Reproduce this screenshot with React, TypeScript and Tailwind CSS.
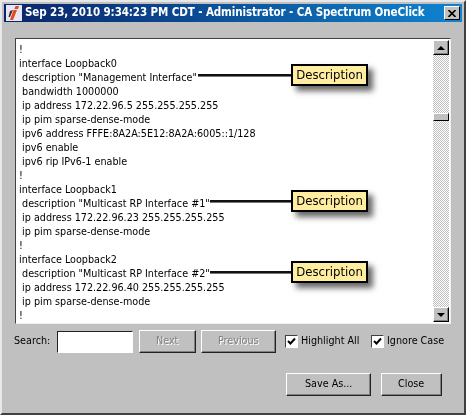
import type { ReactNode } from "react";

const lines = [
  "!",
  "interface Loopback0",
  " description \"Management Interface\"",
  " bandwidth 1000000",
  " ip address 172.22.96.5 255.255.255.255",
  " ip pim sparse-dense-mode",
  " ipv6 address FFFE:8A2A:5E12:8A2A:6005::1/128",
  " ipv6 enable",
  " ipv6 rip IPv6-1 enable",
  "!",
  "interface Loopback1",
  " description \"Multicast RP Interface #1\"",
  " ip address 172.22.96.23 255.255.255.255",
  " ip pim sparse-dense-mode",
  "!",
  "interface Loopback2",
  " description \"Multicast RP Interface #2\"",
  " ip address 172.22.96.40 255.255.255.255",
  " ip pim sparse-dense-mode",
  "!",
];

const callouts = [
  { top: 25, lineLeft: 182, lineWidth: 93 },
  { top: 151, lineLeft: 194, lineWidth: 81 },
  { top: 222, lineLeft: 194, lineWidth: 81 },
];

function Callout({ top, lineLeft, lineWidth }: { top: number; lineLeft: number; lineWidth: number }) {
  return (
    <>
      <div
        className="absolute h-[3px] bg-[#111] border-b border-[#777]"
        style={{ top: top + 10, left: lineLeft, width: lineWidth }}
      />
      <div
        className="absolute left-[275px] w-[77px] h-[22px] bg-[#ffee9f] border-2 border-black text-[13px] leading-[18px] text-center text-black shadow-[5px_5px_6px_rgba(0,0,0,0.6)]"
        style={{ top }}
      >
        Description
      </div>
    </>
  );
}

function Arrow({ up }: { up?: boolean }) {
  return (
    <div className="w-[16px] h-[15px] bg-[#c0c0c0] border border-t-white border-l-white border-r-black border-b-black shadow-[inset_-1px_-1px_0_#808080] flex items-center justify-center shrink-0">
      <svg width="8" height="4" viewBox="0 0 8 4">
        <path d={up ? "M0 4 L4 0 L8 4 Z" : "M0 0 L8 0 L4 4 Z"} fill="#000" />
      </svg>
    </div>
  );
}

function Button({ children, disabled, width }: { children: ReactNode; disabled?: boolean; width: string }) {
  return (
    <div
      className={`${width} h-[23px] flex items-center justify-center border border-t-white border-l-white border-r-[#222] border-b-[#222] shadow-[inset_-1px_-1px_0_#808080] text-[10.7px] ${
        disabled ? "text-[#808080] [text-shadow:1px_1px_0_#fff]" : "text-black"
      }`}
    >
      <span className="will-change-transform">{children}</span>
    </div>
  );
}

function Check({ label }: { label: string }) {
  return (
    <div className="flex items-center gap-[3px] text-[10.7px] text-black">
      <div className="w-[13px] h-[13px] bg-white border border-t-[#404040] border-l-[#404040] border-r-white border-b-white flex items-center justify-center">
        <svg width="9" height="9" viewBox="0 0 9 9">
          <path d="M1 4 L3.5 6.5 L8 1.5" fill="none" stroke="#000" strokeWidth="2" />
        </svg>
      </div>
      <span className="will-change-transform">{label}</span>
    </div>
  );
}

export default function App() {
  return (
    <div className="w-[466px] h-[415px] bg-[#c0c0c0] border-2 border-t-[#e8e8e8] border-l-[#e8e8e8] border-r-[#404040] border-b-[#404040] p-[2px] flex flex-col font-['DejaVu_Sans_Condensed','Liberation_Sans',sans-serif] overflow-hidden">
      <div className="h-[18px] shrink-0 flex items-center bg-gradient-to-r from-[#0a246a] to-[#1084d0]">
        <div className="ml-[2px] w-[16px] h-[16px] bg-[#e8e6f2] flex items-center justify-center shrink-0">
          <svg width="16" height="16" viewBox="0 0 16 16">
            <path d="M4 6 L7 5 L4 12 L2.5 12 Z" fill="#333" />
            <path d="M9.5 1 L13 1 L12 4 L8.5 4 Z" fill="#e8481c" />
            <path d="M7.5 5 L11 5 L7 15 L4 15 Z" fill="#e8481c" />
          </svg>
        </div>
        <div className="ml-[3px] text-white font-bold text-[11.5px] tracking-[-0.1px] whitespace-nowrap will-change-transform">
          Sep 23, 2010 9:34:23 PM CDT - Administrator - CA Spectrum OneClick
        </div>
        <div className="ml-auto mr-[2px] w-[16px] h-[14px] bg-[#c0c0c0] border border-t-white border-l-white border-r-black border-b-black flex items-center justify-center shrink-0">
          <svg width="8" height="7" viewBox="0 0 8 7">
            <path d="M0.5 0 L7.5 7 M7.5 0 L0.5 7" stroke="#000" strokeWidth="1.6" />
          </svg>
        </div>
      </div>

      <div className="mt-[16px] mx-[11px] h-[286px] shrink-0 flex relative bg-white border border-t-[#404040] border-l-[#404040] border-r-[#f0f0f0] border-b-[#f0f0f0] overflow-hidden">
        <div className="flex-1 pt-[4px] pl-[3px] text-[10.7px] leading-[14px] text-black whitespace-pre will-change-transform">
          {lines.map((l, i) => (
            <div key={i}>{l}</div>
          ))}
        </div>
        {callouts.map((c) => (
          <Callout key={c.top} {...c} />
        ))}
        <div className="w-[16px] mr-[1px] mt-[1px] mb-[1px] flex flex-col bg-[repeating-conic-gradient(#c0c0c0_0_25%,#fff_0_50%)] bg-[length:2px_2px]">
          <Arrow up />
          <div className="h-[58px] shrink-0" />
          <div className="h-[8px] bg-[#c0c0c0] border border-t-white border-l-white border-r-black border-b-black shrink-0" />
          <div className="flex-1" />
          <Arrow />
        </div>
      </div>

      <div className="mt-[6px] ml-[10px] flex items-end text-[10.7px] text-black h-[23px]">
        <span className="w-[43px] self-center will-change-transform">Search:</span>
        <div className="w-[76px] h-[22px] bg-white border border-t-[#222] border-l-[#222] border-r-white border-b-white" />
        <div className="ml-[6px]">
          <Button disabled width="w-[57px]">Next</Button>
        </div>
        <div className="ml-[5px]">
          <Button disabled width="w-[75px]">Previous</Button>
        </div>
        <div className="ml-[9px] w-[86px] self-center">
          <Check label="Highlight All" />
        </div>
        <div className="self-center">
          <Check label="Ignore Case" />
        </div>
      </div>

      <div className="mt-[20px] mr-[20px] flex justify-end gap-[10px]">
        <Button width="w-[85px]">Save As...</Button>
        <Button width="w-[61px]">Close</Button>
      </div>
    </div>
  );
}
